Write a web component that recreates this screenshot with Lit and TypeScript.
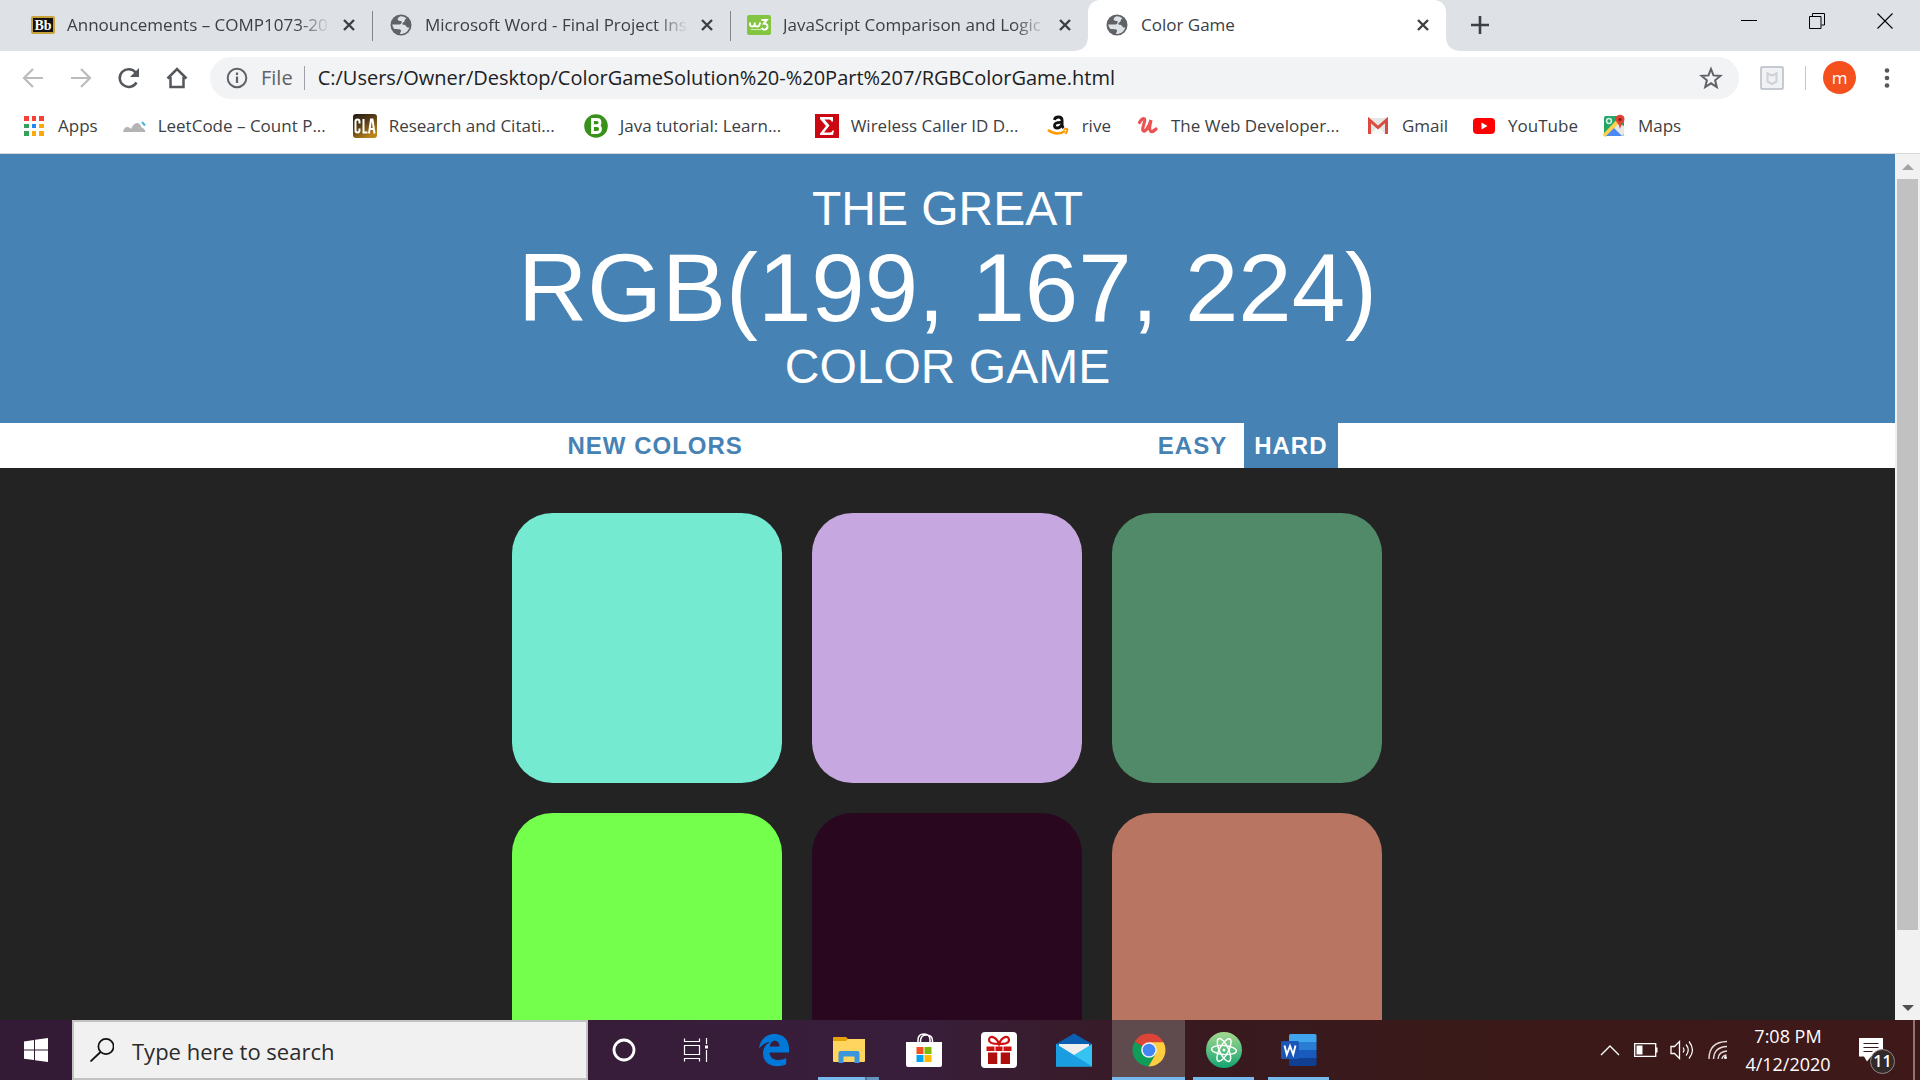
import { LitElement, html, svg, css, type TemplateResult } from "lit";
import { customElement, state } from "lit/decorators.js";
import { classMap } from "lit/directives/class-map.js";

const icon = (w: number, h: number, body: TemplateResult) =>
  html`<svg width=${w} height=${h} viewBox="0 0 ${w} ${h}" fill="none" aria-hidden="true">${body}</svg>`;

/* ---------- favicons ---------- */
const globe = icon(22, 22, svg`
  <circle cx="11" cy="11" r="10.5" fill="#5f6368"/>
  <path d="M10 2.4c-2 .9-2.6 2.2-2.2 3.4.5 1.100 1.900 1 3.200 1.300 1.500.4.6 1.900 0 2.700-.7.8-2.100.7-3.400.8H2.300c.2 1.600.9 3 1.900 4.300 1.300.2 3.300 0 5.300.3 1.600.4 2 1.500 1.300 2.600-.6.900-.9 1.700-.6 2.200 4.500.1 8.200-2.800 9.100-6.600-1.400.4-2.600-.1-3.100-1.200-.6-1.200-1.800-1.400-2.900-1.400-1.300-.2-1.200-1.600-.1-2.300 1.300-.7 1.500-1.300 1.600-2.200.1-1 .7-1.500 1.700-1.600-1.700-1.600-4.100-2.500-6.500-2.300z" fill="#dee1e6"/>`);
const blackboard = icon(24, 18, svg`
  <rect x="1" y="1" width="22" height="16" rx="1" fill="#111" stroke="#c9a33a" stroke-width="2"/>
  <text x="12" y="14" text-anchor="middle" font-family="Liberation Serif, serif" font-size="14" font-weight="700" fill="#fff">Bb</text>`);
const w3 = icon(24, 20, svg`
  <rect width="24" height="20" rx="2" fill="#83c441"/>
  <path d="M3 7.500v1.500q0 2.500 2.300 2.500T7.700 9V7.500 9q0 2.500 2.400 2.500T12.700 9l.8-1.500" stroke="#fff" stroke-width="1.900"/>
  <path d="M14.500 5h5.300l-3 3.600q3.700 0 3.700 3t-3.200 3q-1.900 0-2.800-1.600" stroke="#fff" stroke-width="1.900"/>
  <path d="M4 14.500h10" stroke="#d4ecb8" stroke-width="1"/>`);

/* ---------- bookmark icons ---------- */
const appsIcon = icon(24, 24, svg`
  <path d="M2 2h5v5H2zM10 2h4v5h-4zM17 2h5v5h-5z" fill="#f44336"/>
  <path d="M2 10h5v4H2zM2 17h5v5H2z" fill="#34a25a"/>
  <path d="M10 10h4v4h-4z" fill="#1e88f5"/>
  <path d="M17 10h5v4h-5zM10 17h4v5h-4zM17 17h5v5h-5z" fill="#fba80a"/>`);
const leetIcon = icon(24, 24, svg`
  <path d="M1 18q1-5 4.500-5 2 0 3.500 2 2.500-6 6-6 3 0 4.500 4.500 3 .5 4 4.500z" fill="#b4b4b4"/>
  <path d="M20 8l3 3.500" stroke="#48b5dc" stroke-width="2"/>`);
const claIcon = icon(24, 24, svg`
  <defs><linearGradient id="cla" x1="0" y1="0" x2="0.6" y2="1"><stop offset="0" stop-color="#231b13"/><stop offset=".5" stop-color="#5b3f17"/><stop offset="1" stop-color="#b98318"/></linearGradient></defs>
  <rect width="24" height="24" rx="3" fill="url(#cla)"/>
  <path d="M6.500 9.500V7.500q0-2-2-2t-2 2v9q0 2 2 2t2-2v-2M10.500 5v13.500h4M16 19.500l2-14h1.500l2 14M17 15h4" stroke="#fff" stroke-width="2"/>`);
const javaIcon = icon(24, 24, svg`
  <circle cx="12" cy="12" r="11.800" fill="#37911b"/>
  <path d="M8.500 5.500h4.500q3 0 3 3t-3 3.200q3.500 0 3.500 3.400t-3.500 3.400H8.500zM8.500 11.700h4.500" stroke="#fff" stroke-width="2.800"/>`);
const sigmaIcon = icon(24, 24, svg`
  <rect width="24" height="24" fill="#cb0712"/>
  <path d="M5 3h13v4.500h-1.500q-.5-2-2.500-2H9.500l5 6-5.500 7h6q2 0 2.500-2H19L18 21H5v-1.500l6-7.500-6-7z" fill="#fff"/>`);
const amazonIcon = icon(24, 24, svg`
  <path d="M8.500 6q.4-3 4-3 3.600 0 3.600 3.500V11q0 1.500 1.400 3M16 8.500q-7.500-.5-7.500 3 0 2.500 2.700 2.500 2.800 0 4.800-3.500" stroke="#111" stroke-width="2.800"/>
  <path d="M2 16q9 6.500 17 1" stroke="#f90" stroke-width="2.500"/>
  <path d="M17.500 15.500q4-1.500 4 0t-2 4.500" stroke="#f90" stroke-width="1.800"/>`);
const udemyIcon = icon(24, 24, svg`
  <path d="M4.500 8.500q3-5 5-3.500c1.500 1.500-3 9-1.500 11.500s6-3 8-10.500c-1.500 6-2 10.500 0 11.500q2 .5 5-2.500" stroke="#eb5252" stroke-width="3.200" stroke-linecap="round"/>`);
const gmailIcon = icon(24, 24, svg`
  <path d="M2 4h20v16H2z" fill="#e6e6e6"/><path d="M5 20l7-8 7 8z" fill="#f8f8f8"/>
  <path d="M3.500 20V6l8.500 7.500L20.500 6v14" stroke="#da4a3e" stroke-width="3"/>`);
const youtubeIcon = icon(24, 24, svg`
  <rect x="1" y="4" width="22" height="16" rx="4" fill="#f00"/><path d="M9.500 8.500l6 3.500-6 3.500z" fill="#fff"/>`);
const mapsIcon = icon(24, 24, svg`
  <rect x="2" y="2" width="20" height="20" rx="2" fill="#22a565"/>
  <path d="M3 21L15 9l7 3v8l-2 2H4z" fill="#e8e8e8"/>
  <path d="M2 22L18 5" stroke="#ffd04b" stroke-width="4"/>
  <path d="M4 22l8-8 8 8z" fill="#4a8af4"/>
  <circle cx="7" cy="7" r="2.400" stroke="#d8f3e3" stroke-width="1.500"/>
  <path d="M18 15q-.5-4-3-6.500a4.500 4.500 0 1 1 6 0Q18.500 11 18 15z" fill="#e34133"/><circle cx="18" cy="5.500" r="1.600" fill="#7a211a"/>`);

/* ---------- browser controls ---------- */
const cross = icon(14, 14, svg`<path d="M2 2l10 10M12 2L2 12" stroke="#3c4043" stroke-width="2.400"/>`);
const plus = icon(20, 20, svg`<path d="M10 1v18M1 10h18" stroke="#3c4043" stroke-width="2.600"/>`);
const arrowL = icon(24, 24, svg`<path d="M22 12H3M12 3l-9 9 9 9" stroke="#b9bbbd" stroke-width="2.200"/>`);
const arrowR = icon(24, 24, svg`<path d="M2 12h19M12 3l9 9-9 9" stroke="#b9bbbd" stroke-width="2.200"/>`);
const reload = icon(24, 24, svg`<path d="M19.500 16.500A9 8.800 0 1 1 18.700 6.500" stroke="#54585c" stroke-width="2.500"/><path d="M22 2v9h-9z" fill="#54585c"/>`);
const home = icon(24, 24, svg`<path d="M2.500 12.500L12 3l9.500 9.500M5.500 11v10h13V11" stroke="#54585c" stroke-width="2.500"/>`);
const info = icon(22, 22, svg`<circle cx="11" cy="11" r="9.300" stroke="#5f6368" stroke-width="2"/><path d="M11 9.500V16M11 5.500V8" stroke="#5f6368" stroke-width="2.200"/>`);
const star = icon(24, 24, svg`<path d="M12 3l2.500 6.400 6.900.5-5.300 4.400 1.700 6.700L12 17.300 6.200 21l1.700-6.700L2.600 9.900l6.900-.5z" stroke="#5f6368" stroke-width="2"/>`);
const shield = icon(24, 24, svg`<rect x="1" y="1" width="22" height="22" rx="1" fill="#f1f2f3" stroke="#b4bcc4" stroke-width="1.500"/><path d="M7.500 7.500l4.500 2 4.500-2v8L12 18l-4.500-2.500z" stroke="#d0d3d6" stroke-width="2.200"/>`);
const dots = icon(6, 24, svg`<g fill="#54585c"><circle cx="3" cy="4.500" r="2.300"/><circle cx="3" cy="12" r="2.300"/><circle cx="3" cy="19.500" r="2.300"/></g>`);
const minimize = icon(16, 16, svg`<path d="M0 7.500h16" stroke="#000"/>`);
const restore = icon(16, 16, svg`<path d="M.5 3.500h11.500v12H.5zM3.500 3V.500h12v11.500H12.500" stroke="#000"/>`);
const closeWin = icon(16, 16, svg`<path d="M.5.500l15 15M15.500.500l-15 15" stroke="#000" stroke-width="1.100"/>`);
const tri = (d: string, color: string) => icon(12, 6, svg`<path d=${d} fill=${color}/>`);

/* ---------- taskbar icons ---------- */
const winLogo = icon(24, 24, svg`<path d="M0 3.500l10-1.500v9.500H0zM11 1.800L24 0v11.500H11zM0 12.500h10V22L0 20.700zM11 12.500h13V24L11 22.200z" fill="#fff"/>`);
const magnifier = icon(24, 24, svg`<circle cx="16" cy="8.500" r="7.600" stroke="#111" stroke-width="1.700"/><path d="M10.500 14L.5 23.500" stroke="#111" stroke-width="1.800"/>`);
const cortana = icon(24, 24, svg`<circle cx="12" cy="12" r="10" stroke="#fff" stroke-width="2.800"/>`);
const taskView = icon(26, 24, svg`<path d="M1.500.5v3h15v-3M1.500 23.500v-3h15v3M1.500 7.500h15v9h-15zM23.500 0v6M23.500 12v12" stroke="#fff" stroke-width="1.200"/><path d="M22 7.500h3v3h-3z" fill="#fff"/>`);
const edge = icon(32, 34, svg`<path d="M1 15.500C2 7 8 1 16.500 1 26 1 31 7.500 31 15.500v4H11.500c.3 5 4 7.500 9 7.500 3 0 5.500-.8 7.700-2v6.300c-2.500 1.300-5.500 2-9 2C10.500 33.300 5 28 5 20.500c0-5.500 3-9.500 7.500-11.500C8 9.300 4 11.500 1 15.500zM11.700 13.500H21.500c0-3.500-1.700-5.700-4.700-5.700-2.800 0-4.600 2.400-5.100 5.700z" fill="#0078d7"/>`);
const explorer = icon(32, 28, svg`
  <path d="M0 2q0-1 1-1h12l2 2v5H0z" fill="#e2a208"/><path d="M0 5h13l2-2h17v22q0 1-1 1H1q-1 0-1-1z" fill="#ffd560"/>
  <path d="M5.500 27V17q0-2 2-2h17q2 0 2 2v10h-5v-6.500h-11V27z" fill="#3d96dc"/>`);
const store = icon(36, 36, svg`
  <path d="M12 12V8q0-6 6-6t6 6v4M14.500 12V9q0-6 6-6t6 6v3" stroke="#fff" stroke-width="1.500"/>
  <path d="M0 10h36v23q0 2-2 2H2q-2 0-2-2z" fill="#fff"/>
  <path d="M10.500 15h7v7h-7z" fill="#f25022"/><path d="M18.500 15h7v7h-7z" fill="#7fba00"/><path d="M10.500 23h7v7h-7z" fill="#00a4ef"/><path d="M18.500 23h7v7h-7z" fill="#ffb900"/>`);
const gift = icon(36, 36, svg`
  <rect width="36" height="36" rx="4" fill="#fff"/>
  <path d="M18 12C15 4 8 3 8 8c0 4 6 4 10 4s10 0 10-4c0-5-7-4-10 4z" stroke="#cf1110" stroke-width="2.200"/>
  <path d="M5.500 14.500h25V19h-25z" fill="#cf1110"/><path d="M7 20.500h22V32H7z" fill="#b00d0d"/><path d="M14 14v5M22 14v5" stroke="#fff"/><path d="M18 20v12" stroke="#fff" stroke-width="3.500"/>`);
const mail = icon(36, 34, svg`
  <path d="M0 11L18 .5 36 11v6H0z" fill="#0a5fb0"/><path d="M3 11h30v10L18 30 3 21z" fill="#efefef"/>
  <path d="M0 11l18 11L36 11v22q0 .5-.5.500H0z" fill="#35c3f3"/><path d="M0 11l36 22.500H0z" fill="#1b9de2"/>`);
const chrome = icon(34, 34, svg`
  <path d="M17 17L2.700 8.700A16.500 16.500 0 0 1 31.300 8.700z" fill="#db4437"/>
  <path d="M17 17l7 4-7.500 12.500A16.500 16.500 0 0 1 2.700 8.700z" fill="#0f9d58"/>
  <path d="M17 9.200h14.500a16.500 16.500 0 0 1-15 24.300l7.200-12.600z" fill="#ffcd40"/>
  <circle cx="17" cy="17" r="7.800" fill="#f1f1f1"/><circle cx="17" cy="17" r="6.300" fill="#4285f4"/>`);
const atom = icon(36, 36, svg`
  <defs><linearGradient id="atom" x1="0" y1="0" x2="0" y2="1"><stop offset="0" stop-color="#a5d98f"/><stop offset="1" stop-color="#12a571"/></linearGradient></defs>
  <circle cx="18" cy="18" r="18" fill="url(#atom)"/><g stroke="#fff" stroke-width="1.400"><ellipse cx="18" cy="18" rx="12.500" ry="4.500" transform="rotate(5 18 18)"/><ellipse cx="18" cy="18" rx="12.500" ry="4.500" transform="rotate(65 18 18)"/><ellipse cx="18" cy="18" rx="12.500" ry="4.500" transform="rotate(118 18 18)"/></g><circle cx="18" cy="18" r="1.500" fill="#fff"/>`);
const word = icon(36, 32, svg`
  <path d="M8 1.500Q8 0 9.500 0H34q1.500 0 1.500 1.500V8H8z" fill="#41a5ee"/><path d="M8 8h27.500v8H8z" fill="#2b7cd3"/><path d="M8 16h27.500v8H8z" fill="#185abd"/><path d="M8 24h27.500v6.500Q35.500 32 34 32H9.500Q8 32 8 30.500z" fill="#103f91"/>
  <rect y="7" width="18" height="18" rx="1.500" fill="#1a56b8"/><path d="M3.500 11.500l2.300 9 3.200-8.500 3.200 8.500 2.300-9" stroke="#fff" stroke-width="1.900"/>`);
const chevron = icon(20, 12, svg`<path d="M1 11l9-9 9 9" stroke="#fff" stroke-width="1.400"/>`);
const battery = icon(24, 14, svg`<path d="M.7.700h21v12.600H.7z" stroke="#fff" stroke-width="1.300"/><path d="M22 4.500h1.500v5H22z" fill="#fff"/><path d="M2.500 2.500h6v9h-6z" fill="#fff"/>`);
const volume = icon(24, 20, svg`<path d="M1 6.500h3.500L9.500 1.500v17l-5-5H1z" stroke="#fff" stroke-width="1.300"/><path d="M13 7.500q2 2.500 0 5M16 4.500q4.500 5.500 0 11M19 1.500q7 8.500 0 17" stroke="#fff" stroke-width="1.200"/>`);
const wifi = icon(20, 20, svg`<path d="M1 19Q1 2 19 1.500M5.500 19Q6 7 19 6.500M10 19q.5-7.500 9-8M14 19q.5-3.500 4.500-4" stroke="#e6dcdc" stroke-width="1.400"/><circle cx="17.500" cy="17.500" r="1.500" fill="#fff"/>`);
const notes = icon(24, 24, svg`<path d="M0 0h24v18.500H12L8 23.500l-3-5H0z" fill="#fff"/><path d="M4.500 5.500h15M4.500 9.500h15M4.500 13.500h9" stroke="#3a1919" stroke-width="1.200"/>`);

const TABS = [
  { title: "Announcements – COMP1073-20", icon: blackboard, fade: true },
  { title: "Microsoft Word - Final Project Ins", icon: globe, fade: true },
  { title: "JavaScript Comparison and Logic", icon: w3, fade: true },
  { title: "Color Game", icon: globe, active: true },
];

const BOOKMARKS: { label: string; icon: TemplateResult; long?: boolean }[] = [
  { label: "Apps", icon: appsIcon },
  { label: "LeetCode – Count P...", icon: leetIcon, long: true },
  { label: "Research and Citati...", icon: claIcon, long: true },
  { label: "Java tutorial: Learn...", icon: javaIcon, long: true },
  { label: "Wireless Caller ID D...", icon: sigmaIcon, long: true },
  { label: "rive", icon: amazonIcon },
  { label: "The Web Developer...", icon: udemyIcon, long: true },
  { label: "Gmail", icon: gmailIcon },
  { label: "YouTube", icon: youtubeIcon },
  { label: "Maps", icon: mapsIcon },
];

const APPS = [
  { name: "Microsoft Edge", icon: edge },
  { name: "File Explorer", icon: explorer, open: true, stacked: true },
  { name: "Microsoft Store", icon: store },
  { name: "Gifts", icon: gift },
  { name: "Mail", icon: mail },
  { name: "Google Chrome", icon: chrome, open: true, current: true },
  { name: "Atom", icon: atom, open: true },
  { name: "Word", icon: word, open: true },
];

const UI_FONT = css`"Open Sans", "Noto Sans", sans-serif`;

const base = css`
  * { box-sizing: border-box; }
  svg { display: block; flex: none; }
  button { font: inherit; color: inherit; background: none; border: 0; padding: 0; margin: 0; display: flex; align-items: center; justify-content: center; }
  a { color: inherit; text-decoration: none; }
`;

@customElement("browser-chrome")
class BrowserChrome extends LitElement {
  static styles = [base, css`
    :host { display: block; background: #fff; font-family: ${UI_FONT}; color: #3c4043; border-bottom: 1px solid #d6d8db; }
    .strip { display: flex; height: 51px; background: #dee1e6; padding-left: 14px; }
    .tab { display: flex; align-items: center; width: 358px; padding: 0 16px 2px 15px; position: relative; font-size: 17px; }
    .tab + .tab:not(.active)::before { content: ""; position: absolute; left: 0; top: 11px; width: 1px; height: 30px; background: #80868b; }
    .favicon { display: flex; width: 24px; margin: 0 12px 0 2px; justify-content: center; }
    .title { flex: 1; white-space: nowrap; }
    .fade { mask-image: linear-gradient(to right, #000 calc(100% - 32px), transparent); }
    .close { width: 14px; height: 24px; margin-left: 12px; }
    .active { background: #fff; border-radius: 12px 12px 0 0; }
    .active::before, .active::after { content: ""; position: absolute; bottom: 0; width: 12px; height: 12px; }
    .active::before { left: -12px; background: radial-gradient(circle at 0 0, #dee1e6 11px, #fff 12px); }
    .active::after { right: -12px; background: radial-gradient(circle at 100% 0, #dee1e6 11px, #fff 12px); }
    .new-tab { width: 36px; height: 49px; margin-left: 16px; }
    .window { display: flex; margin: 0 1px 0 auto; height: 42px; }
    .window button { width: 68px; }
    .toolbar { display: flex; align-items: center; height: 53px; padding: 0 21px 0 9px; }
    .nav { width: 48px; height: 48px; }
    .omnibox { flex: 1; display: flex; align-items: center; height: 42px; margin: 0 21px 0 9px; border-radius: 21px; background: #f1f3f4; padding: 0 16px; font-size: 20px; }
    .scheme { color: #5f6368; margin-left: 13px; }
    .rule { width: 1px; height: 24px; background: #9aa0a6; margin: 0 13px 0 11px; }
    .url { flex: 1; min-width: 0; border: 0; outline: 0; padding: 0; background: none; font: inherit; color: #202124; }
    .tool-rule { width: 1px; height: 24px; background: #c6c9cc; margin: 0 17px 0 21px; }
    .avatar { width: 33px; height: 33px; border-radius: 50%; background: #f4511e; color: #fff; font-size: 17px; }
    .menu { width: 24px; height: 33px; margin-left: 19px; }
    .bookmarks { display: flex; gap: 24px; height: 49px; align-items: center; padding: 0 22px 6px; font-size: 17px; white-space: nowrap; }
    .bookmark { display: flex; align-items: center; gap: 12px; }
    .long { width: 207px; }
  `];

  render() {
    return html`
      <div class="strip" role="tablist">
        ${TABS.map((t) => html`
          <div class=${classMap({ tab: true, active: !!t.active })} role="tab" aria-selected=${t.active ? "true" : "false"}>
            <span class="favicon">${t.icon}</span>
            <span class=${classMap({ title: true, fade: !!t.fade })}>${t.title}</span>
            <button class="close" aria-label="Close tab">${cross}</button>
          </div>`)}
        <button class="new-tab" aria-label="New tab">${plus}</button>
        <div class="window">
          <button aria-label="Minimize">${minimize}</button>
          <button aria-label="Restore">${restore}</button>
          <button aria-label="Close">${closeWin}</button>
        </div>
      </div>
      <div class="toolbar">
        <button class="nav" aria-label="Back" disabled>${arrowL}</button>
        <button class="nav" aria-label="Forward" disabled>${arrowR}</button>
        <button class="nav" aria-label="Reload">${reload}</button>
        <button class="nav" aria-label="Home">${home}</button>
        <div class="omnibox">
          ${info}
          <label class="scheme" for="url">File</label>
          <span class="rule"></span>
          <input id="url" class="url" type="text" spellcheck="false" .value=${"C:/Users/Owner/Desktop/ColorGameSolution%20-%20Part%207/RGBColorGame.html"}>
          <button aria-label="Bookmark this page">${star}</button>
        </div>
        <button aria-label="Web protection">${shield}</button>
        <span class="tool-rule"></span>
        <button class="avatar" aria-label="Profile">m</button>
        <button class="menu" aria-label="Menu">${dots}</button>
      </div>
      <nav class="bookmarks">
        ${BOOKMARKS.map((b) => html`<a href="#" class=${classMap({ bookmark: true, long: !!b.long })}>${b.icon}<span>${b.label}</span></a>`)}
      </nav>`;
  }
}

@customElement("color-game")
class ColorGame extends LitElement {
  static styles = [base, css`
    :host { display: flex; flex: 1; min-height: 0; overflow: hidden; background: #232323; font-family: "Liberation Sans", Arial, sans-serif; }
    .page { flex: 1; min-width: 0; overflow: hidden; }
    h1 { margin: 0; padding: 28px 0 30px; background: #4682b4; color: #fff; font-weight: 400; font-size: 48px; line-height: 53px; text-align: center; text-transform: uppercase; }
    .picked { display: block; font-size: 96px; line-height: 105px; }
    .stripe { background: #fff; color: #4682b4; }
    .controls { display: flex; width: 780px; margin: 0 auto; height: 45px; font-size: 24px; font-weight: 700; }
    .controls button { padding: 0 10px; letter-spacing: 1px; text-transform: uppercase; }
    .message { flex: 1; }
    .easy { margin-right: 7px; }
    .controls .selected { background: #4682b4; color: #fff; }
    .board { display: grid; grid-template-columns: repeat(3, 270px); gap: 30px; width: 871px; margin: 45px auto 0; }
    .square { aspect-ratio: 1; border-radius: 15%; }
    .scroll { display: flex; flex-direction: column; width: 25px; background: #f1f1f1; }
    .scroll button { height: 25px; }
    .track { flex: 1; padding: 0 2px; }
    .thumb { height: 92%; background: #c1c1c1; }
  `];

  @state() private level: "easy" | "hard" = "hard";
  private colors = ["#74ebd0", "#c7a7e0", "#508a68", "#75ff4d", "#29081f", "#b87561"];

  render() {
    return html`
      <div class="page">
        <h1>The Great <span class="picked">RGB(199, 167, 224)</span> Color Game</h1>
        <div class="stripe">
          <div class="controls">
            <button>New Colors</button>
            <span class="message"></span>
            <button class=${classMap({ easy: true, selected: this.level === "easy" })} @click=${() => (this.level = "easy")}>Easy</button>
            <button class=${classMap({ selected: this.level === "hard" })} @click=${() => (this.level = "hard")}>Hard</button>
          </div>
        </div>
        <div class="board">
          ${this.colors.map((c) => html`<button class="square" style="background:${c}" aria-label=${c}></button>`)}
        </div>
      </div>
      <div class="scroll">
        <button aria-label="Scroll up">${tri("M0 6l6-6 6 6z", "#a3a3a3")}</button>
        <div class="track"><div class="thumb"></div></div>
        <button aria-label="Scroll down">${tri("M0 0l6 6 6-6z", "#505050")}</button>
      </div>`;
  }
}

@customElement("task-bar")
class TaskBar extends LitElement {
  static styles = [base, css`
    :host { display: flex; height: 60px; color: #fff; font-family: ${UI_FONT}; background: linear-gradient(to right, #331a35, #381e3a 48%, #381a20 62%, #3a1919 75%, #3f1919); }
    .cell { width: 72px; }
    .search { display: flex; align-items: center; gap: 18px; width: 516px; padding: 0 16px; background: #f1f1f1; border: 2px solid #c2c2c2; }
    .search input { flex: 1; min-width: 0; border: 0; outline: 0; padding: 2px 0 0; background: none; font: inherit; font-size: 22px; color: #2b2b2b; }
    .search input::placeholder { color: #2b2b2b; opacity: 1; }
    .apps { display: flex; gap: 2px; margin-left: 5px; }
    .app { width: 73px; position: relative; }
    .app.open::after { content: ""; position: absolute; left: 6px; right: 6px; bottom: 0; height: 3px; background: #76b9ed; }
    .app.stacked::after { background: linear-gradient(to right, #76b9ed 47px, #4a7094 47px, #4a7094 49px, #6494bd 49px); }
    .app.current { background: #5f4a4d; }
    .app.current::after { left: 0; right: 0; }
    .tray { display: flex; align-items: center; margin-left: auto; }
    .tray .item { width: 36px; height: 60px; }
    .clock { width: 104px; text-align: center; font-size: 18px; line-height: 28px; }
    .action { width: 62px; height: 60px; position: relative; }
    .badge { position: absolute; left: 30px; top: 29px; width: 25px; height: 25px; border: 1px solid #8f8585; border-radius: 50%; background: #332929; font-size: 16px; font-weight: 600; line-height: 23px; text-align: center; }
    .desktop { width: 7px; height: 60px; margin-left: 11px; border-left: 2px solid #8b7576; }
  `];

  render() {
    return html`
      <button class="cell" aria-label="Start">${winLogo}</button>
      <label class="search">${magnifier}<input type="text" placeholder="Type here to search" aria-label="Search"></label>
      <button class="cell" aria-label="Cortana">${cortana}</button>
      <button class="cell" aria-label="Task view">${taskView}</button>
      <div class="apps">
        ${APPS.map((a) => html`<button aria-label=${a.name} class=${classMap({ app: true, open: !!a.open, stacked: !!a.stacked, current: !!a.current })}>${a.icon}</button>`)}
      </div>
      <div class="tray">
        <button class="item" aria-label="Show hidden icons">${chevron}</button>
        <button class="item" aria-label="Battery">${battery}</button>
        <button class="item" aria-label="Volume">${volume}</button>
        <button class="item" aria-label="Network">${wifi}</button>
        <div class="clock">7:08 PM<br>4/12/2020</div>
        <button class="action" aria-label="Notifications">${notes}<span class="badge">11</span></button>
        <button class="desktop" aria-label="Show desktop"></button>
      </div>`;
  }
}

@customElement("app-root")
class AppRoot extends LitElement {
  static styles = css`
    :host { display: flex; flex-direction: column; height: 100vh; overflow: hidden; }
    browser-chrome, task-bar { flex: none; }
  `;
  render() {
    return html`<browser-chrome></browser-chrome><color-game></color-game><task-bar></task-bar>`;
  }
}
